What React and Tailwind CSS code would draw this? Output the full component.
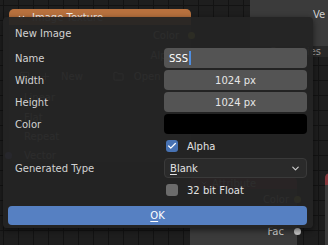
import { Check, ChevronDown, Plus, Folder, Image } from 'lucide-react';

const font = { fontFamily: '"DejaVu Sans", "Liberation Sans", sans-serif' };

function Socket({ color, className }) {
  return <span className={'absolute w-[7px] h-[7px] rounded-full ' + className} style={{ backgroundColor: color }} />;
}

function Field({ children, className }) {
  return (
    <div className={'h-[20px] rounded-[4px] bg-[#545454] flex items-center text-[10px] text-[#e6e6e6] ' + (className || '')}>
      {children}
    </div>
  );
}

function Label({ children }) {
  return <div className="h-[20px] flex items-center pl-[7px] text-[10px] text-[#d2d2d2]">{children}</div>;
}

export default function App() {
  return (
    <div
      className="relative w-[328px] h-[245px] overflow-hidden bg-[#1e1e1e] bg-[linear-gradient(to_right,#131313_1px,transparent_1px),linear-gradient(to_bottom,#131313_1px,transparent_1px)] bg-[size:15px_15px] bg-[position:3px_5px]"
      style={font}
    >
      {/* image texture node, under the popup */}
      <div className="absolute left-[9px] top-[9px] w-[182px] h-[153px] rounded-[5px] bg-[#303030] text-[10px] text-[#bdbdbd]">
        <div className="h-[16px] rounded-t-[5px] bg-[#b8713e] flex items-center gap-[6px] pl-[8px] text-[#eeeeee]">
          <ChevronDown size={9} strokeWidth={3} />
          <span>Image Texture</span>
        </div>
        <div className="flex flex-col">
          <div className="h-[20px] flex items-center justify-end pr-[12px] relative">
            Color
            <Socket color="#c7c729" className="right-[-4px] top-[7px]" />
          </div>
          <div className="h-[20px] flex items-center justify-end pr-[12px] relative">
            Alpha
            <Socket color="#a1a1a1" className="right-[-4px] top-[7px]" />
          </div>
          <div className="h-[22px] flex items-center gap-[10px] pl-[10px]">
            <Image size={11} />
            <Plus size={11} />
            <span>New</span>
            <Folder size={11} className="ml-[20px]" />
            <span>Open</span>
          </div>
          <div className="h-[20px] flex items-center pl-[15px]">Linear</div>
          <div className="h-[20px] flex items-center pl-[15px]">Flat</div>
          <div className="h-[19px] flex items-center pl-[15px]">Repeat</div>
          <div className="h-[19px] flex items-center pl-[15px] relative">
            Vector
            <Socket color="#6363c7" className="left-[-4px] top-[6px]" />
          </div>
        </div>
      </div>

      {/* node at top right */}
      <div className="absolute left-[250px] top-[-10px] w-[100px] h-[67px] rounded-[5px] bg-[#3b3b3b] text-[10px] text-[#d0d0d0]">
        <div className="h-[56px] pt-[17px] pl-[63px]">Ve</div>
        <div className="h-[11px] bg-[#282828] flex items-center justify-end pr-[29px] text-[#9a9a9a]">Properties</div>
      </div>

      {/* attribute node */}
      <div className="absolute left-[190px] top-[177px] w-[107px] h-[80px] rounded-[5px] bg-[#3b3b3b] text-[10px] text-[#cfcfcf]">
        <div className="h-[12px] rounded-t-[5px] bg-[#83353a] flex items-center gap-[4px] pl-[10px]">
          <ChevronDown size={8} strokeWidth={3} />
          <span>Attribute</span>
        </div>
        <div className="h-[20px] flex items-center justify-end pr-[8px] relative">
          Color
          <Socket color="#c7c729" className="right-[-4px] top-[7px]" />
        </div>
        <div className="h-[12px]" />
        <div className="h-[20px] flex items-center justify-end pr-[13px] relative">
          Fac
          <Socket color="#c4c4c4" className="right-[-4px] top-[7px]" />
        </div>
      </div>

      {/* node at far right */}
      <div className="absolute left-[325px] top-[173px] w-[40px] h-[90px] rounded-[5px] bg-[#3b3b3b]">
        <div className="h-[12px] rounded-t-[5px] bg-[#83353a]" />
      </div>

      {/* New Image popup */}
      <div className="absolute left-[3px] top-[17px] w-[310px] h-[211px] rounded-[4px] bg-[#242424]/95 shadow-[0_2px_6px_rgba(0,0,0,0.55)] pl-[5px] pr-[6px] pt-[6px] flex flex-col">
        <div className="h-[20px] flex items-center pl-[7px] text-[10px] text-[#d2d2d2]">New Image</div>
        <div className="mt-[5px] grid grid-cols-[156px_1fr] gap-y-[2px]">
          <Label>Name</Label>
          <Field className="pl-[5px]">
            <span className="text-white">SSS</span>
            <span className="w-[2px] h-[14px] bg-[#4f8ee0] ml-[1px]" />
          </Field>
          <Label>Width</Label>
          <Field className="justify-center">1024 px</Field>
          <Label>Height</Label>
          <Field className="justify-center">1024 px</Field>
          <Label>Color</Label>
          <div className="h-[20px] rounded-[4px] bg-black" />
          <div />
          <div className="h-[20px] flex items-center gap-[9px] pl-[2px] text-[10px] text-[#e2e2e2]">
            <span className="w-[12px] h-[12px] rounded-[3px] bg-[#4772b3] flex items-center justify-center text-white">
              <Check size={10} strokeWidth={3} />
            </span>
            Alpha
          </div>
          <Label>Generated Type</Label>
          <div className="h-[20px] rounded-[4px] bg-[#2a2a2a] border border-[#3a3a3a] flex items-center justify-between pl-[5px] pr-[5px] text-[10px] text-[#e2e2e2]">
            <span><span className="underline underline-offset-[2px]">B</span>lank</span>
            <ChevronDown size={11} strokeWidth={2.5} className="text-[#cfcfcf]" />
          </div>
          <div />
          <div className="h-[20px] flex items-center gap-[9px] pl-[2px] text-[10px] text-[#e2e2e2]">
            <span className="w-[12px] h-[12px] rounded-[3px] bg-[#6b6b6b]" />
            32 bit Float
          </div>
        </div>
        <div className="mt-[6px] h-[19px] rounded-[4px] bg-[#5680c2] flex items-center justify-center text-[10px] text-white">
          <span><span className="underline underline-offset-[2px]">O</span>K</span>
        </div>
      </div>
    </div>
  );
}
